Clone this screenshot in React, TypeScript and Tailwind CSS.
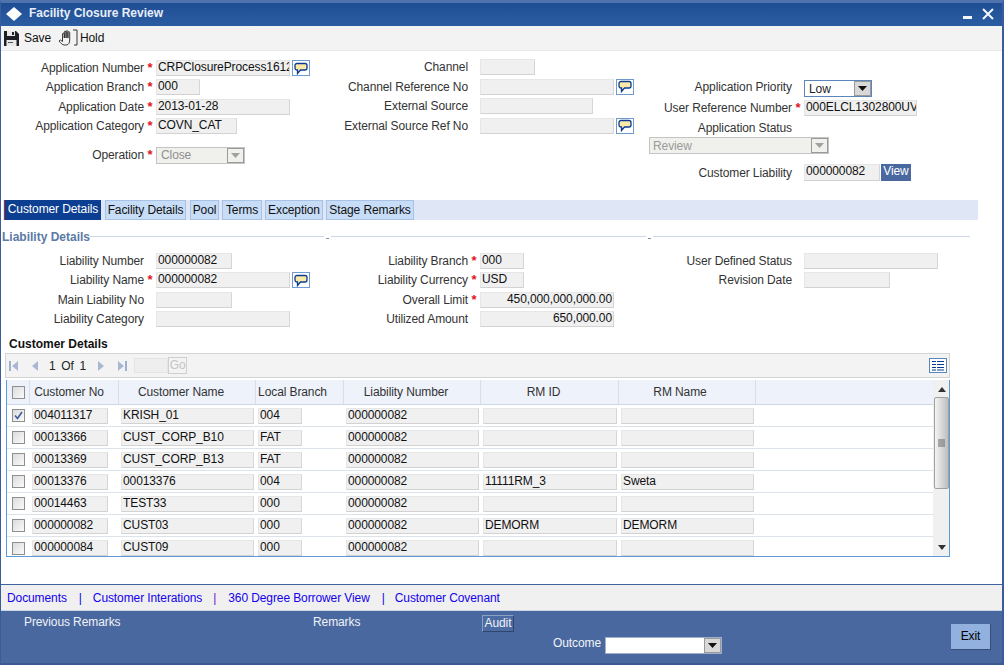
import React from 'react';

const inputCls =
  'h-full bg-[#f0f0f0] border border-[#e6e6e6] border-r-[#d6d6d6] border-b-[#d2d2d2] text-[12px] leading-[13px] text-[#111] pl-[1px] overflow-hidden whitespace-nowrap';

const BubbleBtn = () => (
  <span className="ml-[2px] w-[18px] h-[16px] border border-[#6f9ad0] bg-white flex items-center justify-center shrink-0">
    <svg width="14" height="13" viewBox="0 0 14 13">
      <path
        d="M3 1.500h8c1 0 2 .8 2 2v2.500c0 1.200-1 2-2 2H6.500L3.500 11.500V8H3C2 8 1 7.200 1 6V3.500c0-1.200 1-2 2-2z"
        fill="#fde9a6"
        stroke="#0b3a94"
        strokeWidth="1.300"
      />
    </svg>
  </span>
);

const Field: React.FC<{
  label: string;
  labelW: number;
  w: number;
  value?: string;
  req?: boolean;
  right?: boolean;
  bubble?: boolean;
}> = ({ label, labelW, w, value, req, right, bubble }) => (
  <div className="flex items-center h-[16px]">
    <span className="text-right text-[12px] text-[#333] whitespace-nowrap shrink-0" style={{ width: labelW }}>
      {label}
    </span>
    <span className="w-[12px] text-center text-[#e0141c] text-[13px] font-bold leading-[12px] shrink-0">{req ? '*' : ''}</span>
    <div className={inputCls + (right ? ' text-right pr-[1px]' : '')} style={{ width: w }}>
      {value}
    </div>
    {bubble && <BubbleBtn />}
  </div>
);

const SelectArrow = ({ disabled }: { disabled?: boolean }) => (
  <span
    className={
      'w-[17px] h-[15px] border border-[#9a9a9a] flex items-center justify-center shrink-0 ' +
      (disabled ? 'bg-[#f0f0ec]' : 'bg-[#d8d8d8]')
    }
  >
    <svg width="9" height="5" viewBox="0 0 9 5">
      <path d="M0 0h9L4.500 5z" fill={disabled ? '#a0a0a0' : '#111'} />
    </svg>
  </span>
);

const NavTri = ({ dir, bar }: { dir: 'l' | 'r'; bar?: boolean }) => (
  <svg width="12" height="12" viewBox="0 0 12 12">
    {dir === 'l' ? (
      <>
        {bar && <rect x="1" y="1" width="2" height="10" fill="#9fb0cc" />}
        <path d="M10 1v10L4 6z" fill="#a9b8d2" />
      </>
    ) : (
      <>
        {bar && <rect x="9" y="1" width="2" height="10" fill="#9fb0cc" />}
        <path d="M2 1v10l6-5z" fill="#a9b8d2" />
      </>
    )}
  </svg>
);

const colW = [23, 89, 137, 88, 137, 138, 137];
const heads = ['Customer No', 'Customer Name', 'Local Branch', 'Liability Number', 'RM ID', 'RM Name'];
const headPad = ['pr-[10px]', 'pr-[12px]', 'pr-[14px]', 'pr-[12px]', 'pr-[12px]', 'pr-[14px]'];

const rows = [
  ['004011317', 'KRISH_01', '004', '000000082', '', ''],
  ['00013366', 'CUST_CORP_B10', 'FAT', '000000082', '', ''],
  ['00013369', 'CUST_CORP_B13', 'FAT', '000000082', '', ''],
  ['00013376', '00013376', '004', '000000082', '11111RM_3', 'Sweta'],
  ['00014463', 'TEST33', '000', '000000082', '', ''],
  ['000000082', 'CUST03', '000', '000000082', 'DEMORM', 'DEMORM'],
  ['000000084', 'CUST09', '000', '000000082', '', ''],
];

const cellW = [76, 133, 44, 133, 134, 133];

const Check = ({ on }: { on?: boolean }) => (
  <span className="w-[13px] h-[13px] border border-[#8e8f8f] bg-gradient-to-br from-[#dcdcdc] to-[#fafafa] flex items-center justify-center">
    {on && (
      <svg width="9" height="9" viewBox="0 0 9 9">
        <path d="M1 4.500l2.500 3L8 1" fill="none" stroke="#3d5a9c" strokeWidth="1.600" />
      </svg>
    )}
  </span>
);

export default function App() {
  return (
    <div className="w-[1006px] h-[667px] bg-white font-['Liberation_Sans',Arial,sans-serif] tracking-[-0.1px] overflow-hidden flex flex-col">
      <div className="w-[1004px] h-[665px] flex flex-col border-x-[#3a5c9c] border-r-2 border-l-[1px] border-t-[3px] border-t-[#4f74ad] shrink-0">
        {/* title bar */}
        <div className="h-[23px] bg-gradient-to-b from-[#1e4d94] to-[#2c5da2] flex items-center pl-[4px] pr-[8px] pb-[2px] shrink-0">
          <svg width="18" height="16" viewBox="0 0 18 16">
            <path d="M9 1l8 7-8 7-8-7z" fill="#fff" />
          </svg>
          <span className="ml-[6px] text-[12px] font-bold text-[#e8eef8] tracking-normal -mt-[2px]">Facility Closure Review</span>
          <svg className="ml-auto" width="12" height="12" viewBox="0 0 12 12">
            <rect x="1" y="8" width="9" height="3" fill="#f2f5fa" />
          </svg>
          <svg className="ml-[8px]" width="12" height="12" viewBox="0 0 12 12">
            <path d="M1 1l10 10M11 1L1 11" stroke="#f2f5fa" strokeWidth="2" />
          </svg>
        </div>
        {/* toolbar */}
        <div className="h-[25px] bg-[#f3f3f3] border-b border-[#e9e9e9] flex items-center pl-[2px] shrink-0 text-[12px] text-[#111]">
          <svg width="17" height="17" viewBox="0 0 17 17">
            <path d="M1 1h12l3 3v12H1z" fill="#1c2026" />
            <rect x="4" y="1" width="8" height="5" fill="#e8e8e8" />
            <rect x="9" y="2" width="2" height="3" fill="#1c2026" />
            <rect x="3.500" y="10" width="10" height="6" fill="#e8e8e8" />
            <rect x="5" y="12" width="5" height="1" fill="#555" />
          </svg>
          <span className="ml-[4px]">Save</span>
          <svg className="ml-[7px]" width="20" height="18" viewBox="0 0 20 18" fill="none" stroke="#222" strokeWidth="0.900">
            <path d="M1 12l1.500-1 2 1.500V5c0-1.100 1.800-1.100 1.800 0v4V3c0-1.100 1.800-1.100 1.800 0v6V2.500c0-1.100 1.800-1.100 1.800 0V9V3.500c0-1.100 1.800-1.100 1.800 0v7.500c0 2.500-1 5-3.500 5H6.500C4 16 3 14 1 12z" />
            <path d="M15 1h4v15h-3" />
          </svg>
          <span className="ml-[2px]">Hold</span>
        </div>

        {/* application form */}
        <div className="h-[149px] shrink-0 flex">
          <div className="w-[324px] pt-[9px] flex flex-col gap-[3.4px] shrink-0">
            <Field label="Application Number" labelW={143} w={134} value="CRPClosureProcess1612" req bubble />
            <Field label="Application Branch" labelW={143} w={44} value="000" req />
            <Field label="Application Date" labelW={143} w={134} value="2013-01-28" req />
            <Field label="Application Category" labelW={143} w={81} value="COVN_CAT" req />
            <div className="flex items-center h-[17px] mt-[9px]">
              <span className="w-[143px] text-right text-[12px] text-[#333]">Operation</span>
              <span className="w-[12px] text-center text-[#e0141c] text-[13px] font-bold leading-[12px]">*</span>
              <div className="w-[89px] h-full bg-[#f0f0ec] border border-[#c4c4c4] flex items-center justify-between text-[12px] text-[#8f8f8f] pl-[4px]">
                Close
                <SelectArrow disabled />
              </div>
            </div>
          </div>
          <div className="w-[324px] pt-[8.4px] flex flex-col gap-[3.4px] shrink-0">
            <Field label="Channel" labelW={143} w={55} />
            <Field label="Channel Reference No" labelW={143} w={134} bubble />
            <Field label="External Source" labelW={143} w={113} />
            <Field label="External Source Ref No" labelW={143} w={134} bubble />
          </div>
          <div className="flex-1 pt-[29px] flex flex-col">
            <div className="flex items-start h-[17px]">
              <span className="w-[143px] text-right text-[12px] text-[#333] leading-[14px]">Application Priority</span>
              <span className="w-[12px]" />
              <div className="w-[68px] h-full bg-white border border-[#5b86b8] flex items-center justify-between text-[12px] text-[#222] pl-[4px]">
                Low
                <SelectArrow />
              </div>
            </div>
            <div className="mt-[3px]">
              <Field label="User Reference Number" labelW={143} w={113} value="000ELCL1302800UV" req />
            </div>
            <div className="w-[143px] text-right text-[12px] text-[#333] mt-[5px] leading-[14px]">Application Status</div>
            <div className="w-[180px] h-[17px] mt-[2px] bg-[#f0f0ec] border border-[#c4c4c4] flex items-center justify-between text-[12px] text-[#9a9a9a] pl-[3px]">
              Review
              <SelectArrow disabled />
            </div>
            <div className="flex items-center h-[17px] mt-[10px]">
              <span className="w-[143px] text-right text-[12px] text-[#333]">Customer Liability</span>
              <span className="w-[12px]" />
              <div className={inputCls + ' w-[76px]'}>000000082</div>
              <span className="ml-[1px] w-[30px] h-full bg-[#4a68a0] text-white text-[12px] text-center leading-[15px]">View</span>
            </div>
          </div>
        </div>

        {/* tabs */}
        <div className="w-[975px] h-[20px] ml-[2px] bg-[#dfe6f5] flex gap-[3px] shrink-0 text-[12px] text-[#111] leading-[18px]">
          <div className="ml-[1px] w-[97px] text-center bg-[#0c3f91] border-l border-l-[#a03030] text-white">Customer Details</div>
          <div className="ml-[1px] w-[81px] text-center bg-[#c7dcf6] border border-[#a8c2e6]">Facility Details</div>
          <div className="ml-[1px] w-[29px] text-center bg-[#c7dcf6] border border-[#a8c2e6]">Pool</div>
          <div className="w-[40px] text-center bg-[#c7dcf6] border border-[#a8c2e6]">Terms</div>
          <div className="w-[58px] text-center bg-[#c7dcf6] border border-[#a8c2e6]">Exception</div>
          <div className="w-[88px] text-center bg-[#c7dcf6] border border-[#a8c2e6]">Stage Remarks</div>
        </div>

        {/* liability section */}
        <div className="h-[24px] flex items-center pl-[1px] pt-[9px] shrink-0">
          <span className="text-[12px] font-bold text-[#5b7aa6] leading-[14px] tracking-normal">Liability Details</span>
          <div className="w-[234px] h-px bg-[#cdd6e8] -mt-[1px]" />
          <div className="w-[3px] h-px bg-[#7f93b8] ml-[2px] mt-[3px]" />
          <div className="w-[315px] h-px bg-[#cdd6e8] ml-[2px] -mt-[1px]" />
          <div className="w-[3px] h-px bg-[#7f93b8] ml-[2px] mt-[3px]" />
          <div className="w-[317px] h-px bg-[#cdd6e8] ml-[2px] -mt-[1px]" />
        </div>
        <div className="h-[83px] shrink-0 flex pt-[9px]">
          <div className="w-[324px] flex flex-col gap-[3.4px] shrink-0">
            <Field label="Liability Number" labelW={143} w={76} value="000000082" />
            <Field label="Liability Name" labelW={143} w={134} value="000000082" req bubble />
            <Field label="Main Liability No" labelW={143} w={76} />
            <Field label="Liability Category" labelW={143} w={134} />
          </div>
          <div className="w-[324px] flex flex-col gap-[3.4px] shrink-0">
            <Field label="Liability Branch" labelW={143} w={44} value="000" req />
            <Field label="Liability Currency" labelW={143} w={44} value="USD" req />
            <Field label="Overall Limit" labelW={143} w={134} value="450,000,000,000.00" req right />
            <Field label="Utilized Amount" labelW={143} w={134} value="650,000.00" right />
          </div>
          <div className="flex-1 flex flex-col gap-[3.4px]">
            <Field label="User Defined Status" labelW={143} w={134} />
            <Field label="Revision Date" labelW={143} w={86} />
          </div>
        </div>

        {/* customer details grid */}
        <div className="ml-[8px] text-[12px] font-bold text-[#111] leading-[14px] mt-[10px] shrink-0 tracking-normal">Customer Details</div>
        <div className="ml-[4px] mt-[2px] w-[945px] h-[25px] bg-[#f3f3f3] border border-[#d4d4d4] flex items-center shrink-0 pl-[2px] text-[12px] text-[#222]">
          <NavTri dir="l" bar />
          <span className="ml-[8px]"><NavTri dir="l" /></span>
          <span className="ml-[9px] [word-spacing:2.5px]">1 Of 1</span>
          <span className="ml-[10px]"><NavTri dir="r" /></span>
          <span className="ml-[8px]"><NavTri dir="r" bar /></span>
          <div className="ml-[6px] w-[34px] h-[15px] bg-[#eeeeee] border border-[#e4e4e4]" />
          <div className="w-[19px] h-[17px] border border-[#cfcfcf] text-[#c4c4c4] text-center leading-[15px]">Go</div>
          <div className="ml-auto mr-[2px] w-[18px] h-[15px] border border-[#5b86b8] bg-white flex items-center justify-center">
            <svg width="12" height="11" viewBox="0 0 12 11" fill="none" stroke="#0b3a94">
              <path d="M0 1.500h4M0 4.500h4M0 7.500h4M0 10h4M5 1.500h7M5 4.500h7M5 7.500h7M5 10h7" />
            </svg>
          </div>
        </div>
        <div className="ml-[5px] mt-[2px] w-[944px] h-[177px] border-x border-b border-[#5b9bd8] flex shrink-0 bg-white overflow-hidden">
          <div className="w-[926px] shrink-0">
            <div className="h-[25px] bg-[#eef2fb] border-b border-[#cfd6e8] flex text-[12px] text-[#333]">
              <div className="flex items-center justify-center border-r border-[#d8deee]" style={{ width: colW[0] }}>
                <Check />
              </div>
              {heads.map((h, i) => (
                <div
                  key={h}
                  className={'flex items-center justify-center border-r border-[#d8deee] ' + headPad[i]}
                  style={{ width: colW[i + 1] }}
                >
                  {h}
                </div>
              ))}
            </div>
            {rows.map((r, ri) => (
              <div key={ri} className={'h-[22px] flex items-center ' + (ri < 6 ? 'border-b border-[#dde3ea]' : '')}>
                <div className="flex items-center justify-center shrink-0" style={{ width: colW[0] }}>
                  <Check on={ri === 0} />
                </div>
                {r.map((v, ci) => (
                  <div key={ci} className="h-[16px] pl-[2px] shrink-0" style={{ width: colW[ci + 1] }}>
                    <div className={inputCls} style={{ width: cellW[ci] }}>
                      {v}
                    </div>
                  </div>
                ))}
              </div>
            ))}
          </div>
          {/* scrollbar */}
          <div className="flex-1 bg-[#f0f0f0] flex flex-col items-center pt-[7px] pl-[1px]">
            <svg width="8" height="5" viewBox="0 0 8 5">
              <path d="M0 5h8L4 0z" fill="#333" />
            </svg>
            <div className="mt-[5px] w-[15px] h-[92px] border border-[#a0a0a0] rounded-[2px] bg-gradient-to-r from-[#f4f4f4] to-[#bdbdbd] flex items-center justify-center">
              <svg width="7" height="8" viewBox="0 0 7 8" stroke="#666">
                <path d="M0 1h7M0 3h7M0 5h7M0 7h7" />
              </svg>
            </div>
            <svg className="mt-auto mb-[6px]" width="8" height="5" viewBox="0 0 8 5">
              <path d="M0 0h8L4 5z" fill="#333" />
            </svg>
          </div>
        </div>

        <div className="flex-1" />

        {/* links */}
        <div className="h-[27px] bg-[#f0f0f0] border-t border-t-[#3f62a0] border-b border-b-[#cdd6e6] flex items-center pl-[6px] text-[12px] text-[#1400ee] shrink-0">
          <span>Documents</span>
          <span className="ml-[12px]">|</span>
          <span className="ml-[11px]">Customer Interations</span>
          <span className="ml-[11px] text-[#6a11c9]">|</span>
          <span className="ml-[12px]">360 Degree Borrower View</span>
          <span className="ml-[12px]">|</span>
          <span className="ml-[10px]">Customer Covenant</span>
        </div>

        {/* footer */}
        <div className="h-[54px] bg-[#4a68a0] border-b-2 border-b-[#3d5a90] flex text-[12px] text-[#f0f3f8] shrink-0">
          <div className="w-[312px] pl-[23px] pt-[2px]">Previous Remarks</div>
          <div className="w-[169px] pt-[2px]">Remarks</div>
          <div className="w-[240px] pt-[4px] flex flex-col">
            <div className="w-[32px] h-[17px] border border-[#2f456f] border-t-[#8ca0c4] border-l-[#8ca0c4] text-center leading-[15px] bg-[#4d6ba3]">Audit</div>
            <div className="flex items-start mt-[5px] ml-[71px]">
              <span className="mr-[4px] leading-[12px]">Outcome</span>
              <div className="w-[118px] h-[17px] bg-white border border-[#9fb0cc] flex justify-end">
                <SelectArrow />
              </div>
            </div>
          </div>
          <div className="ml-auto mr-[11px] mt-[13px] w-[40px] h-[26px] bg-[#92b1de] border-b border-r border-[#3a4f78] text-black text-center leading-[25px]">Exit</div>
        </div>
      </div>
    </div>
  );
}
